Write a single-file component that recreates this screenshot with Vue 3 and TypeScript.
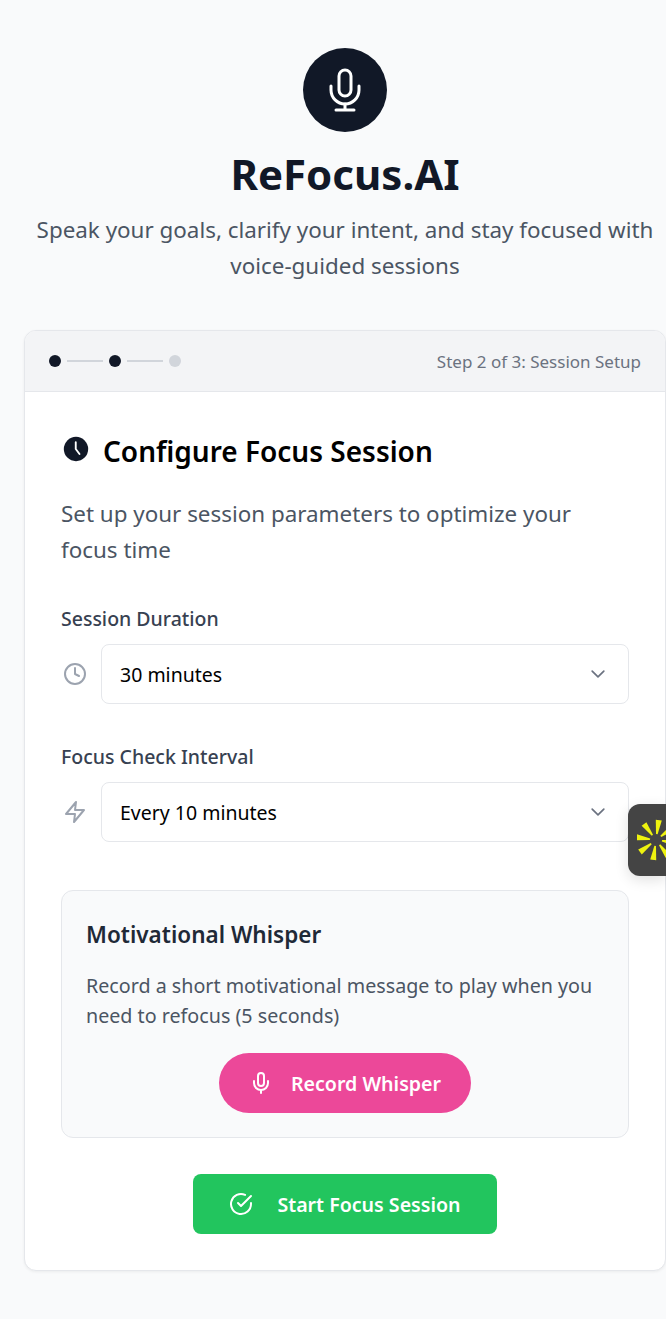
<script setup lang="ts">
import { ref } from 'vue';

const duration = ref('30 minutes');
const interval = ref('Every 10 minutes');

const durations = ['15 minutes', '30 minutes', '45 minutes', '60 minutes'];
const intervals = ['Every 5 minutes', 'Every 10 minutes', 'Every 15 minutes'];

// wedge arms of the little widget star, narrow at the hub and wide at the tip
const arms = Array.from({ length: 8 }, (_, i) => {
  const a = ((8 + i * 45) * Math.PI) / 180;
  const pt = (r: number, w: number) =>
    `${(19 + r * Math.sin(a) + w * Math.cos(a)).toFixed(1)},${(22 - r * Math.cos(a) + w * Math.sin(a)).toFixed(1)}`;
  return [pt(6, -0.8), pt(20, -3), pt(20, 3), pt(6, 0.8)].join(' ');
});
</script>

<template>
  <main class="page">
    <header class="hero">
      <div class="logo">
        <svg width="48" height="48" viewBox="0 0 24 24" fill="none" stroke="#fff" stroke-width="1.5" stroke-linecap="round" stroke-linejoin="round">
          <path d="M12 2a3 3 0 0 0-3 3v7a3 3 0 0 0 6 0V5a3 3 0 0 0-3-3Z" />
          <path d="M19 10v2a7 7 0 0 1-14 0v-2" />
          <path d="M12 19v3M7.5 22h9" />
        </svg>
      </div>
      <h1>ReFocus.AI</h1>
      <p>Speak your goals, clarify your intent, and stay focused with voice-guided sessions</p>
    </header>

    <section class="card">
      <div class="card-top">
        <div class="steps">
          <span class="dot on"></span>
          <span class="line"></span>
          <span class="dot on"></span>
          <span class="line"></span>
          <span class="dot"></span>
        </div>
        <span class="step-text">Step 2 of 3: Session Setup</span>
      </div>

      <div class="card-body">
        <h2>
          <svg class="title-icon" width="30" height="30" viewBox="0 0 24 24">
            <circle cx="12" cy="12" r="9.75" fill="#111827" />
            <path d="M11.8 6.5V12l3 4" fill="none" stroke="#fff" stroke-width="1.5" stroke-linecap="round" stroke-linejoin="round" />
          </svg>
          Configure Focus Session
        </h2>
        <p class="intro">Set up your session parameters to optimize your focus time</p>

        <label class="field-label">Session Duration</label>
        <div class="field">
          <svg class="field-icon" width="24" height="24" viewBox="0 0 24 24" fill="none" stroke="#9ca3af" stroke-width="2" stroke-linecap="round" stroke-linejoin="round">
            <circle cx="12" cy="12" r="10" />
            <path d="M12 6v6l4 2" />
          </svg>
          <div class="select-wrap">
            <select v-model="duration">
              <option v-for="d in durations" :key="d">{{ d }}</option>
            </select>
            <svg class="chevron" width="20" height="20" viewBox="0 0 24 24" fill="none" stroke="#6b7280" stroke-width="2" stroke-linecap="round" stroke-linejoin="round"><path d="m5 8.5 7 7 7-7" /></svg>
          </div>
        </div>

        <label class="field-label second">Focus Check Interval</label>
        <div class="field">
          <svg class="field-icon" width="24" height="24" viewBox="0 0 24 24" fill="none" stroke="#9ca3af" stroke-width="2" stroke-linecap="round" stroke-linejoin="round">
            <path d="M13 2 3 14h9l-1 8 10-12h-9l1-8Z" />
          </svg>
          <div class="select-wrap">
            <select v-model="interval">
              <option v-for="i in intervals" :key="i">{{ i }}</option>
            </select>
            <svg class="chevron" width="20" height="20" viewBox="0 0 24 24" fill="none" stroke="#6b7280" stroke-width="2" stroke-linecap="round" stroke-linejoin="round"><path d="m5 8.5 7 7 7-7" /></svg>
          </div>
        </div>

        <div class="whisper">
          <h3>Motivational Whisper</h3>
          <p>Record a short motivational message to play when you need to refocus (5 seconds)</p>
          <button class="btn-pink" type="button">
            <svg width="24" height="24" viewBox="0 0 24 24" fill="none" stroke="#fff" stroke-width="2" stroke-linecap="round" stroke-linejoin="round">
              <path d="M12 2a3 3 0 0 0-3 3v7a3 3 0 0 0 6 0V5a3 3 0 0 0-3-3Z" />
              <path d="M19 10v2a7 7 0 0 1-14 0v-2" />
              <path d="M12 19v3" />
            </svg>
            Record Whisper
          </button>
        </div>

        <div class="start-row">
          <button class="btn-green" type="button">
            <svg width="24" height="24" viewBox="0 0 24 24" fill="none" stroke="#fff" stroke-width="2" stroke-linecap="round" stroke-linejoin="round">
              <path d="M22 11.08V12a10 10 0 1 1-5.93-9.14" />
              <path d="M22 4 12 14.01l-3-3" />
            </svg>
            Start Focus Session
          </button>
        </div>
      </div>
    </section>

    <aside class="widget">
      <svg width="38" height="44" viewBox="0 0 38 44" fill="#eef20f">
        <polygon v-for="(p, i) in arms" :key="i" :points="p" />
      </svg>
    </aside>
  </main>
</template>

<style scoped>
.page {
  position: relative;
  box-sizing: border-box;
  min-height: 1319px;
  padding: 48px 0 48px 24px;
  background: #f9fafb;
  font-family: "Noto Sans", "Open Sans", sans-serif;
  overflow: hidden;
}

.hero {
  text-align: center;
  margin-bottom: 46px;
}

.logo {
  width: 84px;
  height: 84px;
  margin: 0 auto;
  border-radius: 50%;
  background: #111827;
  display: flex;
  align-items: center;
  justify-content: center;
}

.hero h1 {
  margin: 12px 0 8px;
  font-size: 42px;
  line-height: 60px;
  font-weight: 700;
  color: #111827;
}

.hero p {
  margin: 0;
  font-size: 22.4px;
  line-height: 36px;
  color: #4b5563;
}

.card {
  background: #fff;
  border: 1px solid #e5e7eb;
  border-radius: 12px;
  box-shadow: 0 1px 3px rgba(0, 0, 0, 0.06);
  overflow: hidden;
}

.card-top {
  height: 60px;
  padding: 0 24px;
  background: #f3f4f6;
  border-bottom: 1px solid #e5e7eb;
  display: flex;
  align-items: center;
  justify-content: space-between;
}

.steps {
  display: flex;
  align-items: center;
  gap: 6px;
}

.dot {
  width: 12px;
  height: 12px;
  border-radius: 50%;
  background: #d1d5db;
}

.dot.on {
  background: #111827;
}

.line {
  width: 36px;
  height: 2px;
  background: #d1d5db;
}

.step-text {
  font-size: 17px;
  color: #6b7280;
}

.card-body {
  padding: 36px;
}

h2 {
  margin: 0 0 22px;
  display: flex;
  align-items: center;
  gap: 12px;
  font-size: 28px;
  line-height: 46px;
  font-weight: 600;
  color: #000;
}

.title-icon {
  flex: none;
  margin-top: -4px;
}

.intro {
  margin: 0 0 36px;
  font-size: 22.4px;
  line-height: 36px;
  color: #4b5563;
}

.field-label {
  display: block;
  margin-bottom: 10px;
  font-size: 19.5px;
  line-height: 30px;
  font-weight: 500;
  color: #374151;
}

.field-label.second {
  margin-top: 38px;
}

.field {
  display: flex;
  align-items: center;
  gap: 14px;
}

.field-icon {
  flex: none;
  margin-left: 2px;
}

.select-wrap {
  position: relative;
  flex: 1;
}

select {
  appearance: none;
  display: block;
  box-sizing: border-box;
  width: 100%;
  height: 60px;
  padding: 0 18px;
  background: #fff;
  border: 1px solid #e5e7eb;
  border-radius: 8px;
  font-family: inherit;
  font-size: 19.5px;
  color: #000;
}

.chevron {
  position: absolute;
  right: 21px;
  top: 20px;
  pointer-events: none;
}

.whisper {
  margin-top: 48px;
  padding: 24px;
  background: #f9fafb;
  border: 1px solid #e5e7eb;
  border-radius: 12px;
  text-align: center;
}

.whisper h3 {
  margin: 0 0 16px;
  text-align: left;
  font-size: 22.5px;
  line-height: 40px;
  font-weight: 600;
  color: #1f2937;
}

.whisper p {
  margin: 0 0 22px;
  text-align: left;
  font-size: 19.7px;
  line-height: 30px;
  color: #4b5563;
}

button {
  height: 60px;
  border: none;
  display: inline-flex;
  align-items: center;
  font-family: inherit;
  font-size: 19.6px;
  font-weight: 600;
  color: #fff;
  cursor: pointer;
}

.btn-pink {
  padding: 0 30px;
  gap: 18px;
  background: #ec4899;
  border-radius: 30px;
}

.start-row {
  margin-top: 36px;
  text-align: center;
}

.btn-green {
  padding: 0 36px;
  gap: 24px;
  background: #22c55e;
  border-radius: 8px;
}

.widget {
  position: absolute;
  right: 0;
  top: 804px;
  width: 38px;
  height: 72px;
  background: #444;
  border-radius: 12px 0 0 12px;
  box-shadow: 0 4px 14px rgba(0, 0, 0, 0.12);
  display: flex;
  align-items: center;
  overflow: hidden;
}

.widget svg {
  flex: none;
  margin-left: 9px;
}
</style>

<style>
html, body {
  margin: 0;
  background: #f9fafb;
}
</style>
